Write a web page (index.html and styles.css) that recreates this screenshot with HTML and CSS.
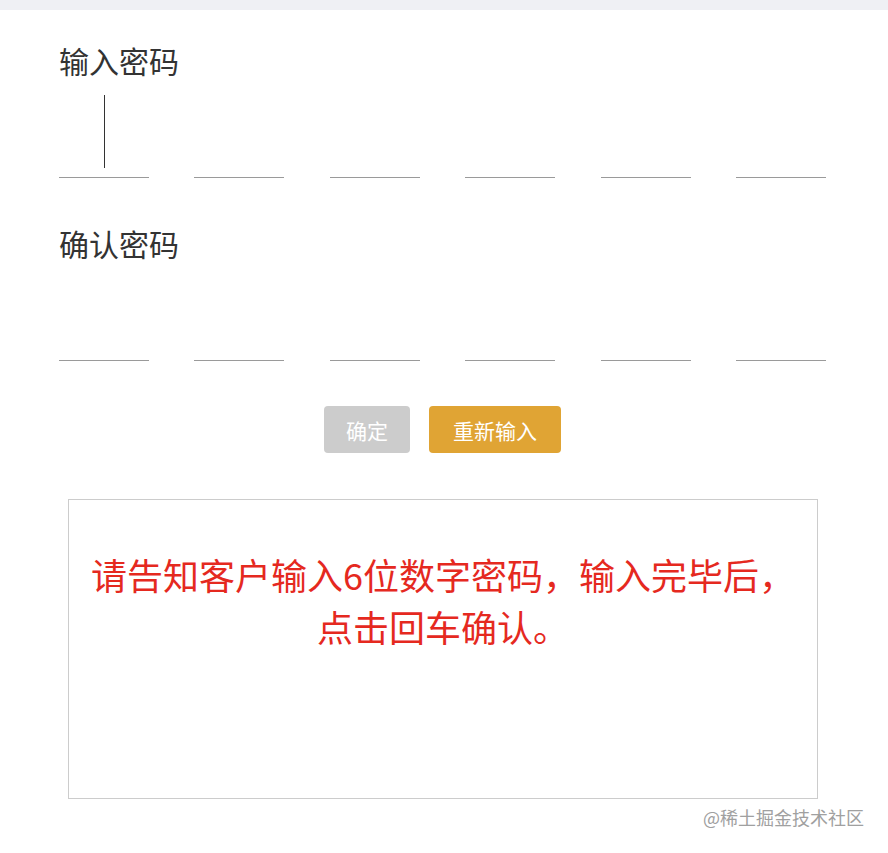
FILE: index.html
```html
<!DOCTYPE html>
<html lang="zh-CN">
<head>
<meta charset="utf-8">
<title>输入密码</title>
<link rel="stylesheet" href="styles.css">
</head>
<body>
<div class="topbar"></div>
<main class="page">
  <section class="field">
    <h2 class="label">输入密码</h2>
    <div class="cells">
      <div class="cell"><span class="caret"></span></div>
      <div class="cell"></div>
      <div class="cell"></div>
      <div class="cell"></div>
      <div class="cell"></div>
      <div class="cell"></div>
    </div>
  </section>
  <section class="field field-second">
    <h2 class="label">确认密码</h2>
    <div class="cells">
      <div class="cell"></div>
      <div class="cell"></div>
      <div class="cell"></div>
      <div class="cell"></div>
      <div class="cell"></div>
      <div class="cell"></div>
    </div>
  </section>
  <div class="actions">
    <button class="btn btn-confirm" type="button">确定</button>
    <button class="btn btn-reset" type="button">重新输入</button>
  </div>
  <div class="notice">
    <p class="notice-text">请告知客户输入6位数字密码，输入完毕后，<br>点击回车确认。</p>
  </div>
</main>
<div class="watermark">@稀土掘金技术社区</div>
</body>
</html>
```

FILE: styles.css
```css
html, body {
  margin: 0;
  padding: 0;
  background: #ffffff;
}

body {
  font-family: "Noto Sans CJK SC", "Noto Sans", sans-serif;
  color: #333333;
}

.topbar {
  height: 10px;
  background: #eff0f4;
}

.page {
  width: 767px;
  margin-left: 59px;
  padding-top: 30px;
}

.label {
  margin: 0;
  font-size: 30px;
  line-height: 40px;
  font-weight: 400;
  color: #333333;
}

.field-second {
  margin-top: 45px;
}

.cells {
  margin-top: 9px;
  display: flex;
  justify-content: space-between;
}

.cell {
  box-sizing: border-box;
  width: 90px;
  height: 89px;
  border-bottom: 1px solid #9a9a9a;
  display: flex;
  align-items: flex-end;
  justify-content: center;
}

.caret {
  display: block;
  width: 1px;
  height: 73px;
  margin-bottom: 9px;
  background: #333333;
}

.actions {
  margin-top: 45px;
  display: flex;
  justify-content: center;
  gap: 19px;
}

.btn {
  box-sizing: border-box;
  height: 47px;
  border: none;
  border-radius: 4px;
  color: #ffffff;
  font-family: "Noto Sans CJK SC", sans-serif;
  font-size: 21px;
  padding: 0;
  cursor: pointer;
}

.btn-confirm {
  width: 86px;
  background: #cccccc;
}

.btn-reset {
  width: 132px;
  background: #e0a434;
}

.notice {
  box-sizing: border-box;
  width: 750px;
  height: 300px;
  margin: 46px 0 0 9px;
  border: 1px solid #cccccc;
  padding-top: 48px;
}

.notice-text {
  margin: 0;
  text-align: center;
  font-size: 36px;
  line-height: 52px;
  color: #e5291f;
}

.watermark {
  margin-top: 6px;
  padding-right: 24px;
  text-align: right;
  font-size: 18px;
  line-height: 24px;
  color: #a0a0a0;
}
```
